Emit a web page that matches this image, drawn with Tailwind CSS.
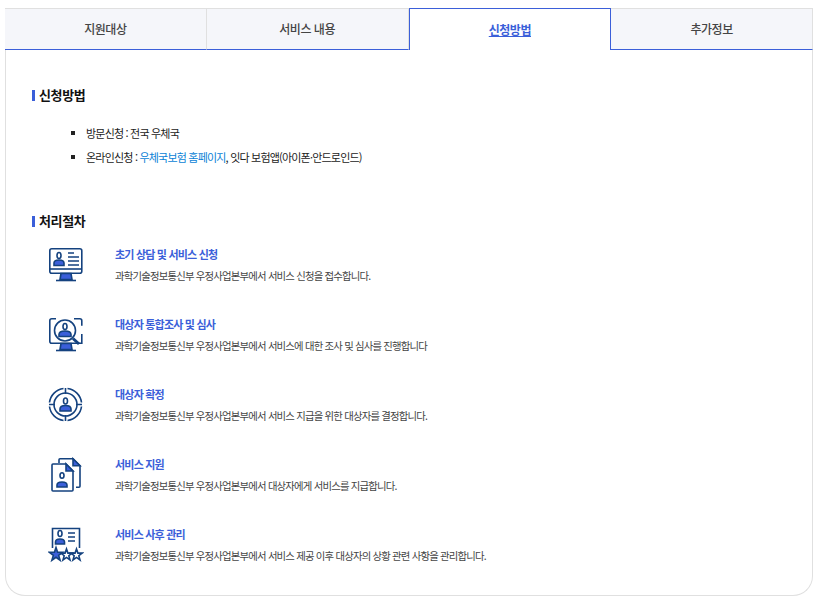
<!DOCTYPE html>
<html lang="ko">
<head>
  <meta charset="UTF-8">
  <title>신청방법</title>
  <script src="https://cdn.jsdelivr.net/npm/@tailwindcss/browser@4"></script>
</head>
<body class="bg-white font-['Noto_Sans_CJK_KR','Noto_Sans',sans-serif] tracking-[-0.05em]">
  <div class="mx-[5px] mt-2 w-[808px] h-[588px] border border-t-0 border-[#e0e0e0] rounded-b-[20px]">
    <!-- tabs -->
    <ul class="flex h-[42px] -mx-px text-[12px] tracking-[-0.04em] font-medium text-[#444]">
      <li class="flex-1 flex items-center justify-center bg-[#f5f6fa] border-t border-r border-[#e0e0e0] border-b-[#3b5fd9] border-b-[1.5px]">지원대상</li>
      <li class="flex-1 flex items-center justify-center bg-[#f5f6fa] border-t border-r border-[#e0e0e0] border-b-[#3b5fd9] border-b-[1.5px]">서비스 내용</li>
      <li class="flex-1 flex items-center justify-center bg-white border border-b-0 border-[#3b5fd9] text-[#3b5fd9] font-bold underline">신청방법</li>
      <li class="flex-1 flex items-center justify-center bg-[#f5f6fa] border-t border-r border-[#e0e0e0] border-b-[#3b5fd9] border-b-[1.5px]">추가정보</li>
    </ul>

    <div class="pl-[26px] pt-[35px]">
      <h3 class="flex items-center gap-[4px] text-[13px] tracking-[-0.03em] leading-5 font-bold text-[#111]"><span class="w-[3px] h-[11px] bg-[#3b5fd9]"></span>신청방법</h3>
      <ul class="mt-[20px] ml-[39px] text-[11px] text-[#222] space-y-[8px]">
        <li class="flex items-center h-4"><span class="w-[4px] h-[4px] bg-[#222] mr-[11px]"></span>방문신청 : 전국 우체국</li>
        <li class="flex items-center h-4"><span class="w-[4px] h-[4px] bg-[#222] mr-[11px]"></span>온라인신청 :&nbsp;<a class="text-[#0a7fd6]">우체국보험 홈페이지</a>, 잇다 보험앱(아이폰·안드로인드)</li>
      </ul>

      <h3 class="mt-[46px] flex items-center gap-[4px] text-[13px] tracking-[-0.03em] leading-5 font-bold text-[#111]"><span class="w-[3px] h-[11px] bg-[#3b5fd9]"></span>처리절차</h3>

      <ol class="mt-[15px]">
        <li class="flex h-[70px]">
          <div class="w-[83px] pl-[16px] pt-[1px]">
            <svg width="36" height="36" viewBox="0 0 36 36" fill="none" stroke="#14427f" stroke-width="1.6">
              <rect x="1.800" y="1.800" width="32" height="24.500" rx="2"/>
              <path d="M2 22h32"/>
              <path d="M13 26.500l-1 6h12l-1-6z" fill="#3b5fd9"/>
              <path d="M8 33.500h20" stroke-width="1.600"/>
              <ellipse cx="11" cy="8.500" rx="2" ry="3"/>
              <path d="M6 18.500v-2.500q0-3 5-3t5 3v2.500z" fill="#3b5fd9"/>
              <path d="M20 6h6M20 10h11M20 14h11M20 18h11" stroke-width="1.300"/>
            </svg>
          </div>
          <div>
            <p class="text-[11px] leading-4 font-bold text-[#3b5fd9]">초기 상담 및 서비스 신청</p>
            <p class="mt-[6px] text-[10.38px] leading-4 text-[#444]">과학기술정보통신부 우정사업본부에서 서비스 신청을 접수합니다.</p>
          </div>
        </li>
        <li class="flex h-[70px]">
          <div class="w-[83px] pl-[16px] pt-[1px]">
            <svg width="36" height="36" viewBox="0 0 36 36" fill="none" stroke="#14427f" stroke-width="1.6">
              <path d="M8 1.800H3.800q-2 0-2 2v20.500q0 2 2 2h30V17M26 1.800h5.800q2 0 2 2v5"/>
              <path d="M13 26.500l-1 6h12l-1-6z" fill="#3b5fd9"/>
              <path d="M8 33.500h20"/>
              <circle cx="17" cy="13.500" r="10.500" fill="#fff"/>
              <ellipse cx="17" cy="9.500" rx="2" ry="3"/>
              <path d="M11 19.500v-2q0-3.500 6-3.500t6 3.500v2z" fill="#3b5fd9"/>
              <path d="M25 21.500l6 5.500" stroke-width="3"/>
            </svg>
          </div>
          <div>
            <p class="text-[11px] leading-4 font-bold text-[#3b5fd9]">대상자 통합조사 및 심사</p>
            <p class="mt-[6px] text-[10.38px] leading-4 text-[#444]">과학기술정보통신부 우정사업본부에서 서비스에 대한 조사 및 심사를 진행합니다</p>
          </div>
        </li>
        <li class="flex h-[70px]">
          <div class="w-[83px] pl-[16px] pt-[1px]">
            <svg width="36" height="36" viewBox="0 0 36 36" fill="none" stroke="#14427f" stroke-width="1.6">
              <path d="M15.500 1.500A16 16 0 0 0 1.500 15.500M19.500 1.500A16 16 0 0 1 33.500 15.500M1.500 19.500A16 16 0 0 0 15.500 33.500M19.500 33.500A16 16 0 0 0 33.500 19.500"/>
              <circle cx="17.500" cy="17.500" r="11.500"/>
              <path d="M1 17.500h6M28 17.500h6M17.500 1v6M17.500 28v6"/>
              <ellipse cx="17.500" cy="14" rx="2" ry="3"/>
              <path d="M12 24v-2q0-3.500 5.500-3.500t5.500 3.500v2z" fill="#3b5fd9"/>
            </svg>
          </div>
          <div>
            <p class="text-[11px] leading-4 font-bold text-[#3b5fd9]">대상자 확정</p>
            <p class="mt-[6px] text-[10.38px] leading-4 text-[#444]">과학기술정보통신부 우정사업본부에서 서비스 지급을 위한 대상자를 결정합니다.</p>
          </div>
        </li>
        <li class="flex h-[70px]">
          <div class="w-[83px] pl-[16px] pt-[1px]">
            <svg width="36" height="36" viewBox="0 0 36 36" fill="none" stroke="#14427f" stroke-width="1.6">
              <path d="M11 6V2.800q0-1 1-1h13l7 7v20.500q0 1-1 1h-3"/>
              <path d="M25 1.800v7h7z" fill="#3b5fd9"/>
              <path d="M5 7h13l7 7v19q0 1-1 1H5q-1 0-1-1V8q0-1 1-1z" fill="#fff"/>
              <path d="M18 7v7h7z" fill="#3b5fd9"/>
              <ellipse cx="14" cy="18.500" rx="2" ry="2.800"/>
              <path d="M9 30v-2q0-3 5-3t5 3v2z" fill="#3b5fd9"/>
            </svg>
          </div>
          <div>
            <p class="text-[11px] leading-4 font-bold text-[#3b5fd9]">서비스 지원</p>
            <p class="mt-[6px] text-[10.38px] leading-4 text-[#444]">과학기술정보통신부 우정사업본부에서 대상자에게 서비스를 지급합니다.</p>
          </div>
        </li>
        <li class="flex h-[70px]">
          <div class="w-[83px] pl-[16px] pt-[1px]">
            <svg width="36" height="36" viewBox="0 0 36 36" fill="none" stroke="#14427f" stroke-width="1.6">
              <path d="M4.500 21V1.500h27V21"/>
              <ellipse cx="12" cy="6.500" rx="2" ry="3"/>
              <path d="M7.500 17v-2q0-3 4.500-3t4.500 3v2z" fill="#3b5fd9"/>
              <path d="M20 6h7M20 10h7M20 14h7" stroke-width="1.300"/>
              <polygon points="8,20.500 9.600,25.200 14.700,25.300 10.700,28.400 12.100,33.200 8,30.300 3.900,33.200 5.300,28.400 1.300,25.300 6.400,25.200" fill="#3b5fd9"/>
              <polygon points="18.500,22 19.900,26.100 24.200,26.100 20.800,28.700 22,32.900 18.500,30.400 15,32.900 16.200,28.700 12.800,26.100 17.100,26.100" fill="#fff"/>
              <polygon points="28.500,22 29.900,26.100 34.200,26.100 30.800,28.700 32,32.900 28.500,30.400 25,32.900 26.200,28.700 22.800,26.100 27.100,26.100" fill="#fff"/>
            </svg>
          </div>
          <div>
            <p class="text-[11px] leading-4 font-bold text-[#3b5fd9]">서비스 사후 관리</p>
            <p class="mt-[6px] text-[10.38px] leading-4 text-[#444]">과학기술정보통신부 우정사업본부에서 서비스 제공 이후 대상자의 상황 관련 사항을 관리합니다.</p>
          </div>
        </li>
      </ol>
    </div>
  </div>
</body>
</html>
